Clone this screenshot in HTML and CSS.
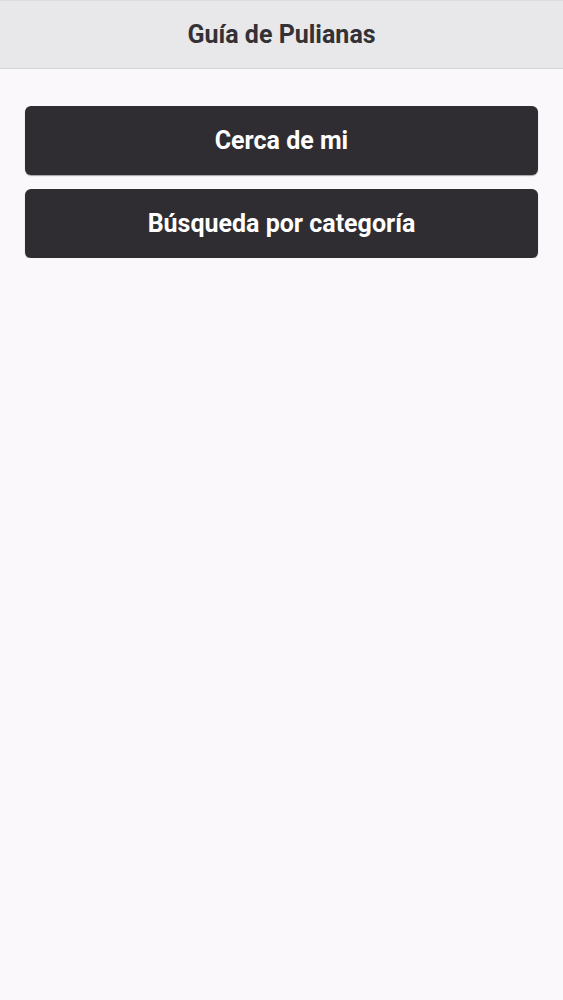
FILE: index.html
```html
<!DOCTYPE html>
<html lang="es">
<head>
<meta charset="utf-8">
<title>Guía de Pulianas</title>
<link rel="stylesheet" href="styles.css">
</head>
<body>
<header class="topbar">
  <h1 class="title">Guía de Pulianas</h1>
</header>
<main class="content">
  <button class="btn">Cerca de mi</button>
  <button class="btn">Búsqueda por categoría</button>
</main>
</body>
</html>
```
FILE: styles.css
```css
html, body {
  margin: 0;
  padding: 0;
  background: #faf8fb;
  font-family: Roboto, "Liberation Sans", sans-serif;
  min-height: 100%;
}
.topbar {
  height: 67px;
  background: #e8e7ea;
  border-top: 1px solid #dcdbde;
  border-bottom: 1px solid #d6d5d8;
  display: flex;
  align-items: center;
  justify-content: center;
  box-sizing: content-box;
}
.title {
  margin: 0;
  font-size: 25px;
  font-weight: 700;
  color: #333135;
}
.content {
  padding: 37px 25px 0 25px;
  display: flex;
  flex-direction: column;
  gap: 14px;
}
.btn {
  height: 69px;
  border: none;
  border-radius: 6px;
  background: #2f2d31;
  color: #ffffff;
  font-family: Roboto, "Liberation Sans", sans-serif;
  font-size: 25px;
  font-weight: 700;
  box-shadow: 0 1px 1px rgba(0,0,0,0.35);
  cursor: pointer;
  padding: 0;
}
```
